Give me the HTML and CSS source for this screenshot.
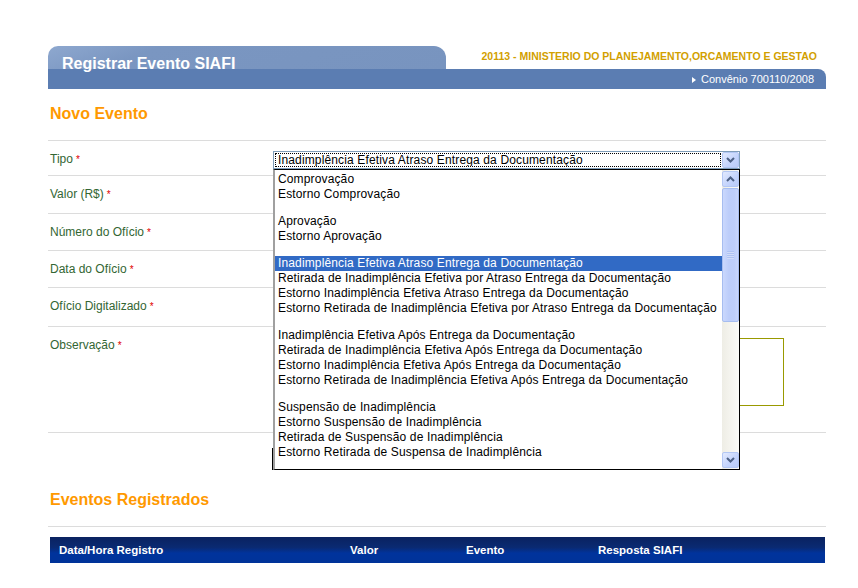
FILE: index.html
```html
<!DOCTYPE html>
<html lang="pt-BR">
<head>
  <meta charset="UTF-8">
  <title>Registrar Evento SIAFI</title>
  <link rel="stylesheet" href="styles.css">
</head>
<body>
  <div class="page">
    <div class="header">
      <div class="header-top">
        <div class="tab"><h1>Registrar Evento SIAFI</h1></div>
        <div class="orgao">20113 - MINISTERIO DO PLANEJAMENTO,ORCAMENTO E GESTAO</div>
      </div>
      <div class="band"><span class="convenio">Convênio 700110/2008</span></div>
    </div>

    <h2 class="section-title">Novo Evento</h2>

    <div class="form">
      <div class="row row-tipo">
        <label>Tipo<span class="req">*</span></label>
        <div class="field field-tipo">
          <div class="select">
            <div class="select-value">Inadimplência Efetiva Atraso Entrega da Documentação</div>
            <div class="xp-btn select-btn">
              <svg width="9" height="6" viewBox="0 0 9 6"><path d="M1 1 L4.5 4.5 L8 1" fill="none" stroke="#4d6185" stroke-width="2"/></svg>
            </div>
          </div>

          <div class="dropdown">
            <div class="options">
              <div class="opt">Comprovação</div>
              <div class="opt">Estorno Comprovação</div>
              <div class="opt-gap"></div>
              <div class="opt">Aprovação</div>
              <div class="opt">Estorno Aprovação</div>
              <div class="opt-gap"></div>
              <div class="opt selected">Inadimplência Efetiva Atraso Entrega da Documentação</div>
              <div class="opt">Retirada de Inadimplência Efetiva por Atraso Entrega da Documentação</div>
              <div class="opt">Estorno Inadimplência Efetiva Atraso Entrega da Documentação</div>
              <div class="opt">Estorno Retirada de Inadimplência Efetiva por Atraso Entrega da Documentação</div>
              <div class="opt-gap"></div>
              <div class="opt">Inadimplência Efetiva Após Entrega da Documentação</div>
              <div class="opt">Retirada de Inadimplência Efetiva Após Entrega da Documentação</div>
              <div class="opt">Estorno Inadimplência Efetiva Após Entrega da Documentação</div>
              <div class="opt">Estorno Retirada de Inadimplência Efetiva Após Entrega da Documentação</div>
              <div class="opt-gap"></div>
              <div class="opt">Suspensão de Inadimplência</div>
              <div class="opt">Estorno Suspensão de Inadimplência</div>
              <div class="opt">Retirada de Suspensão de Inadimplência</div>
              <div class="opt">Estorno Retirada de Suspensa de Inadimplência</div>
            </div>
            <div class="scrollbar">
              <div class="xp-btn sb-btn">
                <svg width="9" height="6" viewBox="0 0 9 6"><path d="M1 5 L4.5 1.5 L8 5" fill="none" stroke="#4d6185" stroke-width="2"/></svg>
              </div>
              <div class="sb-thumb">
                <svg width="7" height="8" viewBox="0 0 7 8"><path d="M0 1.5 H7 M0 3.5 H7 M0 5.5 H7 M0 7.5 H7" stroke="#eef3ff" stroke-width="1"/><path d="M0 1 H7 M0 3 H7 M0 5 H7 M0 7 H7" stroke="#8fa9e6" stroke-width="0.6"/></svg>
              </div>
              <div class="sb-track"></div>
              <div class="xp-btn sb-btn">
                <svg width="9" height="6" viewBox="0 0 9 6"><path d="M1 1 L4.5 4.5 L8 1" fill="none" stroke="#4d6185" stroke-width="2"/></svg>
              </div>
            </div>
          </div>
        </div>
      </div>

      <div class="row row-valor">
        <label>Valor (R$)<span class="req">*</span></label>
        <div class="field"><input class="input input-short" type="text"></div>
      </div>

      <div class="row row-numero">
        <label>Número do Ofício<span class="req">*</span></label>
        <div class="field"><input class="input input-short" type="text"></div>
      </div>

      <div class="row row-data">
        <label>Data do Ofício<span class="req">*</span></label>
        <div class="field"><input class="input input-date" type="text"></div>
      </div>

      <div class="row row-arquivo">
        <label>Ofício Digitalizado<span class="req">*</span></label>
        <div class="field"><input class="input input-file" type="text"></div>
      </div>

      <div class="row row-obs">
        <label>Observação<span class="req">*</span></label>
        <div class="field field-obs"><textarea class="obs"></textarea></div>
      </div>
    </div>

    <div class="actions">
      <button class="btn" aria-label="Registrar"></button>
    </div>

    <h2 class="section-title section-events">Eventos Registrados</h2>

    <div class="events">
      <div class="thead">
        <div class="th">Data/Hora Registro</div>
        <div class="th">Valor</div>
        <div class="th">Evento</div>
        <div class="th">Resposta SIAFI</div>
      </div>
    </div>
  </div>
</body>
</html>
```

FILE: styles.css
```css
:root {
  --tab-color: #7a96c1;
  --band-color: #5b7db2;
  --title-orange: #ff9900;
  --label-green: #336633;
  --line-color: #dcdcdc;
  --xp-blue: #c3d3fc;
}

* {
  box-sizing: border-box;
}

body {
  margin: 0;
  background: #fff;
  color: #000;
  font-family: "Liberation Sans", Arial, sans-serif;
  font-size: 12px;
}

.page {
  width: 778px;
  margin-left: 48px;
  padding-top: 46px;
}

/* header */
.header-top {
  display: flex;
  height: 23px;
}

.tab {
  width: 398px;
  padding: 10px 0 0 14px;
  background: linear-gradient(160deg, #8ea8cf 0%, var(--tab-color) 25%, #7894bf 100%);
  border-radius: 10px 12px 0 0;
}

.tab h1 {
  margin: 0;
  color: #fff;
  font-size: 16px;
  line-height: 16px;
  font-weight: bold;
}

.orgao {
  flex: 1;
  padding-right: 9px;
  text-align: right;
  color: #d29f00;
  font-size: 10.5px;
  font-weight: bold;
  line-height: 20px;
}

.band {
  height: 20px;
  padding-right: 12px;
  background: var(--band-color);
  border-top-right-radius: 8px;
  text-align: right;
  color: #fff;
  font-size: 11px;
  line-height: 20px;
}

.convenio::before {
  content: "";
  display: inline-block;
  margin-right: 5px;
  border-left: 4px solid #fff;
  border-top: 3px solid transparent;
  border-bottom: 3px solid transparent;
  vertical-align: 0;
}

/* titles */
.section-title {
  margin: 15px 0 16px 2px;
  color: var(--title-orange);
  font-size: 16px;
  line-height: 20px;
  font-weight: bold;
}

.section-events {
  margin-top: 20px;
}

/* form */
.form {
  border-top: 1px solid var(--line-color);
}

.row {
  display: grid;
  grid-template-columns: 225px 1fr;
  border-bottom: 1px solid var(--line-color);
}

.row-tipo { height: 35px; }
.row-valor { height: 38px; }
.row-numero { height: 37px; }
.row-data { height: 37px; }
.row-arquivo { height: 39px; }
.row-obs { height: 106px; }

.row label {
  padding: 10px 0 0 2px;
  color: var(--label-green);
  line-height: 16px;
}

.req {
  margin-left: 3px;
  color: #e00000;
  font-size: 10px;
}

.field {
  padding-top: 9px;
}

.input {
  height: 19px;
  border: 1px solid #7f9db9;
  font: inherit;
}

.input-short { width: 150px; }
.input-date { width: 90px; }
.input-file { width: 300px; }

/* select */
.field-tipo {
  position: relative;
  padding-top: 10px;
}

.select {
  display: flex;
  width: 467px;
  height: 18px;
  background: #fff;
  border: 1px solid #7f9db9;
}

.select-value {
  flex: 1;
  margin: 1px 0 1px 1px;
  padding-left: 2px;
  border: 1px dotted #000;
  line-height: 13px;
  letter-spacing: 0.14px;
  white-space: nowrap;
  overflow: hidden;
}

.xp-btn {
  display: flex;
  align-items: center;
  justify-content: center;
  background: linear-gradient(135deg, #e2eafe 0%, var(--xp-blue) 60%, #b9cbf8 100%);
  border: 1px solid #b3c7f4;
  border-radius: 2px;
}

.select-btn {
  width: 17px;
  height: 16px;
  margin-left: 1px;
}

/* dropdown list */
.dropdown {
  position: absolute;
  top: 28px;
  left: 0;
  z-index: 10;
  display: flex;
  width: 467px;
  height: 301px;
  background: #fff;
  border: 1px solid #000;
  border-left: 2px solid #a0a0a0;
}

.options {
  flex: 1;
  padding-top: 2px;
  overflow: hidden;
}

.opt {
  height: 15px;
  padding-left: 3px;
  line-height: 15px;
  letter-spacing: 0.14px;
  white-space: nowrap;
}

.opt.selected {
  background: #316ac5;
  color: #fff;
}

.opt-gap {
  height: 12px;
}

.scrollbar {
  display: flex;
  flex-direction: column;
  width: 17px;
  padding: 1px 0;
  background: linear-gradient(90deg, #eeede5, #fbfbf8);
}

.sb-btn {
  height: 16px;
}

.sb-thumb {
  display: flex;
  align-items: center;
  justify-content: center;
  height: 134px;
  margin-top: 1px;
  background: linear-gradient(90deg, #cad8fd 0%, #bccdfa 40%, #bdcefb 75%, #c8d6fc 100%);
  border: 1px solid #a6bdf0;
  border-radius: 2px;
}

.sb-track {
  flex: 1;
}

/* observação */
.field-obs {
  padding-top: 11px;
}

.obs {
  display: block;
  width: 511px;
  height: 68px;
  border: 1px solid #999900;
  resize: none;
}

/* actions */
.actions {
  padding: 15px 0 0 224px;
}

.btn {
  display: block;
  width: 90px;
  height: 22px;
  border: 1px solid #000;
  background: #ece9d8;
  font: inherit;
}

/* table */
.events {
  padding-top: 10px;
  border-top: 1px solid var(--line-color);
}

.thead {
  display: grid;
  grid-template-columns: 291px 116px 132px 1fr;
  width: 775px;
  height: 26px;
  margin-left: 2px;
  background: linear-gradient(#0a2260 0%, #0a2a72 40%, #00339c 62%, #003399 100%);
}

.th {
  padding-left: 9px;
  color: #fff;
  font-size: 11.5px;
  font-weight: bold;
  line-height: 26px;
}
```
